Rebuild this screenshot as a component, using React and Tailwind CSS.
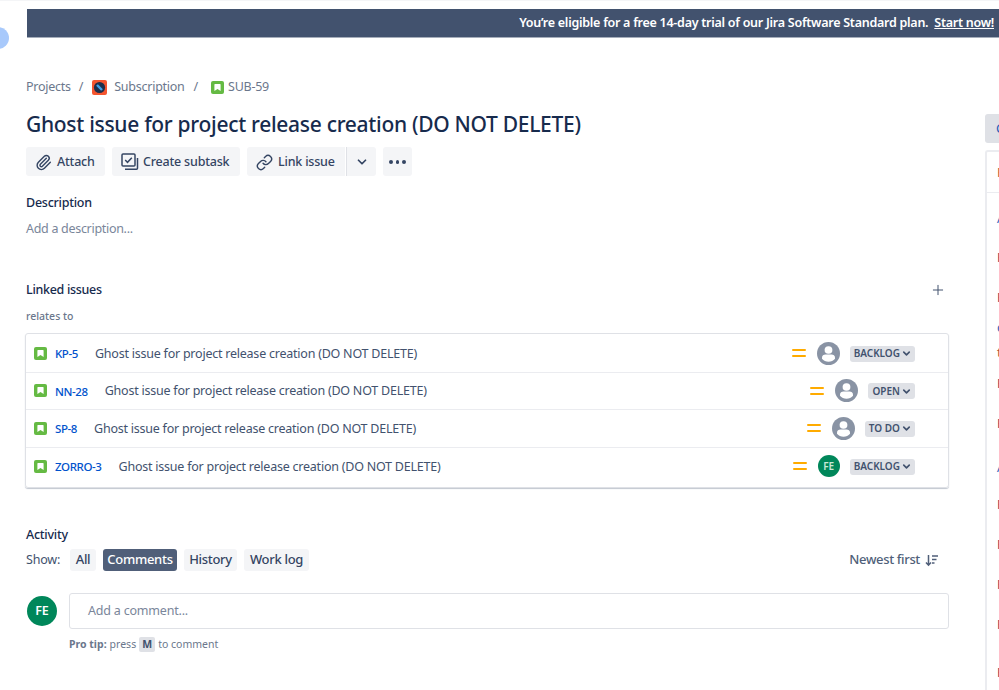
import { ChevronDown, Paperclip, Link as LinkIcon, Plus } from "lucide-react";

const issues = [
  { key: "KP-5", status: "BACKLOG" },
  { key: "NN-28", status: "OPEN" },
  { key: "SP-8", status: "TO DO" },
  { key: "ZORRO-3", status: "BACKLOG", owner: true },
];

// cut off text of the right hand panel, only the first pixel of each row shows
const sideRows = [
  { h: "h-[39px]", text: "A", color: "text-[#2a5bb8]" },
  { h: "h-[40px]", text: "P", color: "text-[#8a2f55]" },
  { h: "h-[30px]", text: "P", color: "text-[#8a2f55]" },
  { h: "h-[25px]", text: "c", color: "text-[#2a5bb8]" },
  { h: "h-[31px]", text: "t", color: "text-[#b4553c]" },
  { h: "h-[40px]", text: "P", color: "text-[#8a2f55]" },
  { h: "h-[44px]", text: "P", color: "text-[#8a2f55]" },
  { h: "h-[37px]", text: "A", color: "text-[#2a5bb8]" },
  { h: "h-[40px]", text: "P", color: "text-[#8a2f55]" },
  { h: "h-[40px]", text: "P", color: "text-[#8a2f55]" },
  { h: "h-[40px]", text: "P", color: "text-[#8a2f55]" },
  { h: "h-[48px]", text: "P", color: "text-[#8a2f55]" },
  { h: "h-[20px]", text: "P", color: "text-[#8a2f55]" },
];

function StoryIcon() {
  return (
    <svg width="13" height="13" viewBox="0 0 13 13" className="shrink-0">
      <rect width="13" height="13" rx="2" fill="#65ba43" />
      <path d="M4 3h5a.6.6 0 0 1 .6.6V10L6.5 8 3.4 10V3.6A.6.6 0 0 1 4 3z" fill="#fff" />
    </svg>
  );
}

function ProjectIcon() {
  return (
    <svg width="15" height="15" viewBox="0 0 15 15" className="shrink-0">
      <rect width="15" height="15" rx="2" fill="#f4552f" />
      <circle cx="7.5" cy="7.5" r="5.6" fill="#1d2f4c" />
      <path d="M5 5l5 5" stroke="#3fa0e8" strokeWidth="2.4" />
    </svg>
  );
}

function SubtaskIcon() {
  return (
    <svg width="18" height="18" viewBox="0 0 18 18" fill="none" stroke="#344563" strokeWidth="1.5" className="shrink-0">
      <rect x="1" y="1" width="13" height="12" rx="1" />
      <path d="M4.2 7l2.3 2.3 4.3-4.6" />
      <path d="M16.5 5v10.2a1 1 0 0 1-1 1H4" />
    </svg>
  );
}

function SortIcon() {
  return (
    <svg width="13" height="13" viewBox="0 0 13 13" fill="none" stroke="#505f79" strokeWidth="1.5" className="shrink-0">
      <path d="M3.5 1v10M1 8.5l2.5 2.7L6 8.5" />
      <path d="M7 2h6M7 5.5h4.5M7 9h2.5" />
    </svg>
  );
}

function UserAvatar() {
  return (
    <svg width="23" height="23" viewBox="0 0 23 23" className="shrink-0">
      <circle cx="11.5" cy="11.5" r="11.5" fill="#8993a4" />
      <rect x="7.6" y="4.2" width="7.8" height="7.6" rx="3.8" fill="#fff" />
      <path d="M5 15.6c0-2 1.6-3 3.5-3h6c1.9 0 3.5 1 3.5 3v1.2c-1.6 2-3.9 3-6.5 3s-4.9-1-6.5-3z" fill="#fff" />
    </svg>
  );
}

function Priority() {
  return (
    <div className="flex w-[14px] shrink-0 flex-col gap-[4px]">
      <div className="h-[2px] rounded-full bg-[#ffab00]" />
      <div className="h-[2px] rounded-full bg-[#ffab00]" />
    </div>
  );
}

function ToolButton({ children, className }) {
  return (
    <button className={"flex h-[29px] items-center rounded-[3px] bg-[#f4f5f7] pt-[1px] text-[12.5px] font-medium tracking-[-0.2px] text-[#344563] " + className}>
      {children}
    </button>
  );
}

function FilterButton({ children, active, className }) {
  return (
    <button
      className={
        "flex h-[22px] items-center justify-center rounded-[3px] text-[13px] font-medium tracking-[-0.3px] " +
        (active ? "bg-[#505f79] text-white " : "bg-[#f4f5f7] text-[#344563] ") +
        className
      }
    >
      {children}
    </button>
  );
}

function IssueRow({ issue, last }) {
  return (
    <div className={"flex h-[37.5px] items-center pl-[8px] pr-[33px] " + (last ? "" : "border-b border-[#ebecf0]")}>
      <StoryIcon />
      <a className="ml-[8px] pt-[1px] text-[11.5px] font-medium tracking-[-0.4px] text-[#0052cc]">{issue.key}</a>
      <span className="ml-[17px] pt-[2px] text-[12.5px] tracking-[-0.23px] text-[#42526e]">Ghost issue for project release creation (DO NOT DELETE)</span>
      <div className="ml-auto flex items-center">
        <Priority />
        <div className="ml-[11px]">
          {issue.owner ? (
            <div className="flex h-[22px] w-[22px] items-center justify-center rounded-full bg-[#00875a] text-[10px] font-semibold text-[#c9e8d8]">FE</div>
          ) : (
            <UserAvatar />
          )}
        </div>
        <div className="ml-[10px] mt-[1px] flex h-[16px] items-center rounded-[3px] bg-[#dfe1e6] pl-[4px] pr-[3px] text-[10px] font-semibold text-[#42526e]">
          {issue.status}
          <ChevronDown size={11} strokeWidth={3.5} className="ml-[1px]" />
        </div>
      </div>
    </div>
  );
}

export default function App() {
  return (
    <div className="relative flex h-[690px] w-[999px] flex-col overflow-hidden bg-white font-['Noto_Sans','Open_Sans',sans-serif] text-[#172b4d]">
      <div className="absolute -left-[13px] top-[27px] h-[22px] w-[22px] rounded-full bg-[#a8c9fb]" />

      <div className="h-[1px] shrink-0 bg-[#f4f5f7]" />
      <div className="ml-[27px] mt-[8px] flex h-[29px] shrink-0 items-center justify-end border-b border-[#a5adba] bg-[#42526e] pr-[5px] text-[12.5px] font-semibold tracking-[-0.26px] text-white">
        <span>You’re eligible for a free 14-day trial of our Jira Software Standard plan.</span>
        <a className="ml-[6px] underline">Start now!</a>
      </div>

      <div className="flex min-h-0 flex-1">
        <div className="ml-[26px] w-[923px] shrink-0">
          <div className="mt-[39px] flex h-[20px] items-center text-[12.5px] tracking-[-0.25px] text-[#6b778c]">
            <span>Projects</span>
            <span className="ml-[8px]">/</span>
            <div className="ml-[9px]"><ProjectIcon /></div>
            <span className="ml-[7px]">Subscription</span>
            <span className="ml-[9px]">/</span>
            <div className="ml-[13px]"><StoryIcon /></div>
            <span className="ml-[4px]">SUB-59</span>
          </div>

          <h1 className="mt-[9px] h-[36px] text-[21px] font-medium leading-[36px] tracking-[-0.3px] text-[#172b4d]">
            Ghost issue for project release creation (DO NOT DELETE)
          </h1>

          <div className="mt-[5px] flex">
            <ToolButton className="w-[79px] pl-[9px]">
              <Paperclip size={17} strokeWidth={2} className="mr-[5px] text-[#344563]" />
              Attach
            </ToolButton>
            <ToolButton className="ml-[7px] w-[128px] pl-[9px]">
              <SubtaskIcon />
              <span className="ml-[4px]">Create subtask</span>
            </ToolButton>
            <ToolButton className="ml-[7px] w-[98px] rounded-r-none pl-[9px]">
              <LinkIcon size={17} strokeWidth={2} className="mr-[5px]" />
              Link issue
            </ToolButton>
            <ToolButton className="ml-[1px] w-[30px] justify-center rounded-l-none border-l border-[#dfe1e6]">
              <ChevronDown size={14} strokeWidth={3} />
            </ToolButton>
            <ToolButton className="ml-[7px] w-[29px] justify-center gap-[3px]">
              <span className="h-[3.5px] w-[3.5px] rounded-full bg-[#344563]" />
              <span className="h-[3.5px] w-[3.5px] rounded-full bg-[#344563]" />
              <span className="h-[3.5px] w-[3.5px] rounded-full bg-[#344563]" />
            </ToolButton>
          </div>

          <h2 className="mt-[17px] h-[20px] text-[12.5px] font-medium leading-[20px] tracking-[-0.25px]">Description</h2>
          <p className="mt-[6px] h-[20px] text-[12.5px] leading-[20px] tracking-[-0.3px] text-[#7a869a]">Add a description...</p>

          <div className="mt-[41px] flex h-[20px] items-center justify-between pr-[3px]">
            <h2 className="pt-[1px] text-[12.5px] font-medium tracking-[-0.3px]">Linked issues</h2>
            <Plus size={16} strokeWidth={1.5} className="text-[#42526e]" />
          </div>
          <p className="mt-[8px] h-[16px] text-[10.5px] font-medium leading-[16px] text-[#6b778c]">relates to</p>

          <div className="-ml-[1px] mt-[9px] h-[155px] w-[924px] rounded-[3px] border border-[#dfe1e6] pt-[1px] shadow-[0_1px_1px_#c1c7d0]">
            {issues.map((issue, i) => (
              <IssueRow key={issue.key} issue={issue} last={i === issues.length - 1} />
            ))}
          </div>

          <h2 className="mt-[37px] h-[20px] text-[12.5px] font-medium leading-[20px] tracking-[-0.25px]">Activity</h2>
          <div className="mt-[4px] flex items-center">
            <span className="w-[44px] text-[12.5px] tracking-[-0.2px] text-[#42526e]">Show:</span>
            <FilterButton className="w-[26px]">All</FilterButton>
            <FilterButton active className="ml-[7px] w-[74px]">Comments</FilterButton>
            <FilterButton className="ml-[7px] w-[53px]">History</FilterButton>
            <FilterButton className="ml-[7px] w-[65px]">Work log</FilterButton>
            <div className="ml-auto mr-[11px] flex items-center gap-[5px] text-[13px] font-medium tracking-[-0.35px] text-[#505f79]">
              Newest first
              <SortIcon />
            </div>
          </div>

          <div className="mt-[22px] flex items-start">
            <div className="ml-[1px] mt-[3px] flex h-[30px] w-[30px] shrink-0 items-center justify-center rounded-full bg-[#00875a] text-[12.5px] font-semibold text-white">FE</div>
            <div className="ml-[12px] flex h-[36px] flex-1 items-center rounded-[3px] border border-[#dfe1e6] pl-[18px] text-[12.5px] tracking-[-0.2px] text-[#7a869a]">
              Add a comment...
            </div>
          </div>
          <div className="ml-[43px] mt-[8px] flex items-center text-[10.5px] text-[#6b778c]">
            <span className="font-bold">Pro tip:</span>
            <span className="ml-[3px]">press</span>
            <span className="mx-[3px] flex h-[15px] w-[16px] items-center justify-center rounded-[2px] bg-[#dfe1e6] font-bold text-[#42526e]">M</span>
            <span>to comment</span>
          </div>
        </div>

        <div className="ml-[36px] mt-[76px] flex min-w-0 flex-1 flex-col">
          <div className="flex h-[29px] shrink-0 items-center overflow-hidden rounded-l-[3px] bg-[#dfe1e6] pl-[11px] text-[13px] text-[#2a5bb8]">C</div>
          <div className="mt-[7px] flex-1 overflow-hidden rounded-tl-[3px] border-l-2 border-t-2 border-[#ebecf0] text-[13px] leading-[20px]">
            <div className="flex h-[41px] items-center border-b border-[#ebecf0] pl-[10px] text-[#b4553c]">P</div>
            <div className="pl-[10px] pt-[15px]">
              {sideRows.map((row, i) => (
                <div key={i} className={row.h + " " + row.color}>
                  {row.text}
                </div>
              ))}
            </div>
          </div>
        </div>
      </div>
    </div>
  );
}
